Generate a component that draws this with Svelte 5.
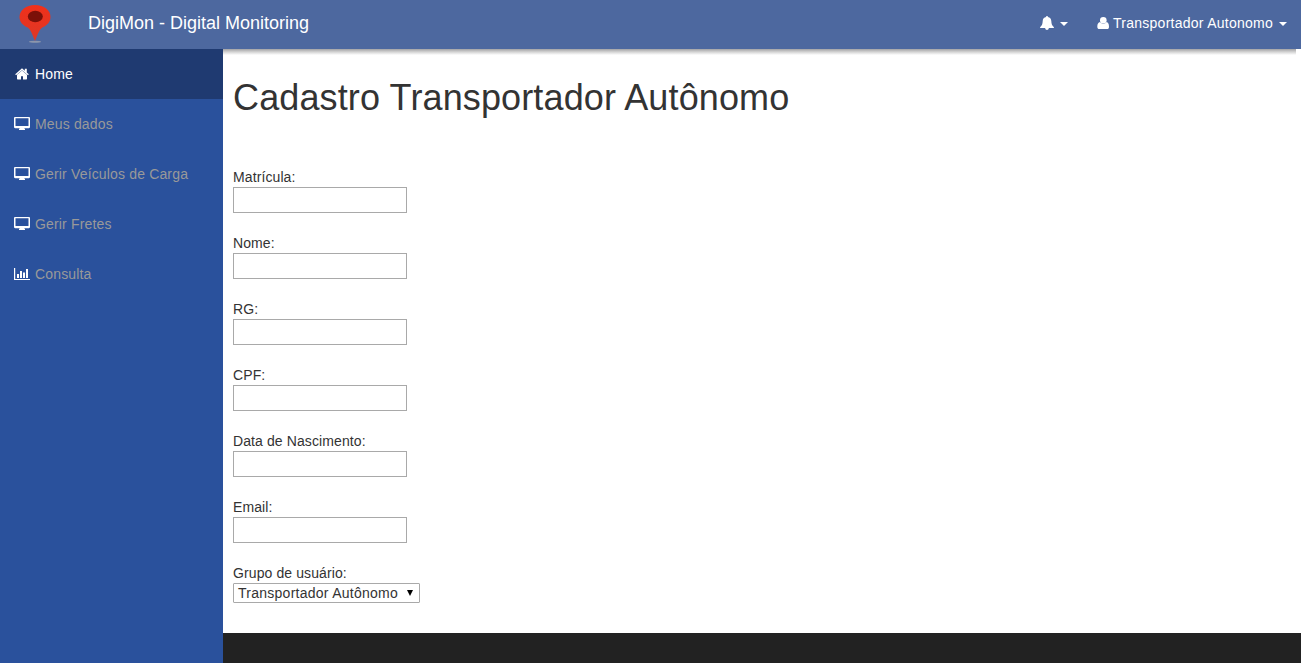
<script>
  const items = [
    { label: 'Home', icon: 'home', active: true },
    { label: 'Meus dados', icon: 'desktop' },
    { label: 'Gerir Veículos de Carga', icon: 'desktop' },
    { label: 'Gerir Fretes', icon: 'desktop' },
    { label: 'Consulta', icon: 'chart' }
  ];
  const fields = ['Matrícula', 'Nome', 'RG', 'CPF', 'Data de Nascimento', 'Email'];
</script>

<header>
  <a class="brand" href="#home">
    <svg class="logo" width="34" height="40" viewBox="0 0 34 40">
      <defs>
        <linearGradient id="pin" x1="0" y1="0" x2="0" y2="1">
          <stop offset="0" stop-color="#f0301a" />
          <stop offset="1" stop-color="#dc3827" />
        </linearGradient>
      </defs>
      <ellipse cx="17" cy="38.800" rx="6" ry="1" fill="#8b96ad" />
      <path fill="url(#pin)" d="M17 2C8 2 1.500 7 1.500 14c0 5 3.500 8.500 8.200 10.500C13 27 14.500 32 17 38c2.500-6 4-11 7.300-13.500C29 22.500 32.500 19 32.500 14 32.500 7 26 2 17 2z" />
      <ellipse cx="17.300" cy="13.500" rx="7.500" ry="5.700" fill="#7b1008" />
    </svg>
    <span>DigiMon - Digital Monitoring</span>
  </a>
  <nav class="tools">
    <a href="#alerts" aria-label="Alertas">
      <svg width="14" height="14" viewBox="0 0 14 14" fill="#fff"><path d="M7 0c.6 0 1 .4.900 1.100C10 1.500 11.200 3 11.300 5c.1 3 .8 4.800 2.700 6.200 0 .6-.4.900-1 .9H8.900C8.700 13.300 8 14 7 14s-1.700-.7-1.900-1.900H1c-.6 0-1-.3-1-.9C1.900 9.800 2.600 8 2.700 5 2.800 3 4 1.500 6.100 1.100 6 .4 6.400 0 7 0z" /></svg>
      <i class="caret bell"></i>
    </a>
    <a href="#user" class="user">
      <svg width="12" height="12" viewBox="0 0 12 12" fill="#fff"><circle cx="6.300" cy="3.300" r="3.300" /><path d="M3.100 5C1.300 5.300.3 7 .3 9.700.3 11.200 1.100 12 2.400 12h7.800c1.200 0 1.800-.8 1.800-2.300C12 7 11.200 5.300 9.500 5 8.700 6.300 7.600 6.700 6.300 6.700S3.900 6.300 3.100 5z" /></svg>
      <span>Transportador Autonomo</span>
      <i class="caret"></i>
    </a>
  </nav>
</header>

<div class="body">
  <aside>
    {#each items as item}
      <a href="#menu" class:active={item.active}>
        {#if item.icon === 'home'}
          <svg width="16" height="12" viewBox="0 0 16 12" fill="#fff"><path d="M8 2.600 3 6.700v4.100c0 .4.300.7.700.7H7V8.200h2v3.300h3.300c.4 0 .7-.3.700-.7V6.700z" /><path d="m1.200 6.200.8 1 6-5 6 5 .8-1-2-1.700V.8h-2v2L8.800.900c-.5-.4-1.100-.4-1.600 0z" /></svg>
        {:else if item.icon === 'desktop'}
          <svg class="desktop" width="16" height="13" viewBox="0 0 16 13" fill="#fff"><path fill-rule="evenodd" d="M1.200 0h13.600C15.500 0 16 .5 16 1.200v8.900c0 .7-.5 1.200-1.200 1.200H10.500v.7H11v1H5v-1h.5v-.7H1.200C.5 11.300 0 10.800 0 10.100V1.200C0 .5.500 0 1.200 0zM1.500 1.200V9h13V1.200z" /></svg>
        {:else}
          <svg width="16" height="12" viewBox="0 0 16 12" fill="#fff"><path d="M0 0h1.200v11H16v1H0zM3 6h2v4H3zM6 3h2v7H6zM9 4.500h2V10H9zM12 1h2v9h-2z" /></svg>
        {/if}
        <span>{item.label}</span>
      </a>
    {/each}
  </aside>
  <main>
    <div class="shade"></div>
    <h1>Cadastro Transportador Autônomo</h1>
    <form>
      {#each fields as field}
        <label><span>{field}:</span><input type="text" /></label>
      {/each}
      <label>
        <span>Grupo de usuário:</span>
        <button type="button" class="select"><span>Transportador Autônomo</span>
          <svg width="6" height="6" viewBox="0 0 6 6"><path d="M0 0h6L3 6z" /></svg>
        </button>
      </label>
    </form>
    <footer></footer>
  </main>
</div>

<style>
  :global(body) { margin: 0; overflow: hidden; }
  :global(#app) {
    height: 663px;
    display: flex;
    flex-direction: column;
    font: 14px/20px "Liberation Sans", Arial, sans-serif;
    color: #333;
  }
  header, header *, .body, .body * { box-sizing: border-box; }
  header {
    height: 49px;
    flex: none;
    display: flex;
    justify-content: space-between;
    background: #4d689f;
    color: #fff;
  }
  a { color: inherit; text-decoration: none; }
  svg { display: block; flex: none; }
  .brand { display: flex; padding: 3px 0 0 18px; font-size: 18px; }
  .brand span { margin: 10px 0 0 36px; white-space: nowrap; }
  .tools { display: flex; align-items: center; height: 46px; padding-right: 14px; }
  .tools a { display: flex; align-items: center; }
  .user { margin-left: 29px; }
  .user span { width: 161px; margin-left: 4px; white-space: nowrap; letter-spacing: 0.26px; }
  .caret {
    border: 4px solid transparent;
    border-top-color: #fff;
    border-bottom: 0;
    margin: 2px 0 0 5px;
  }
  .caret.bell { margin-left: 6px; }
  .body { flex: 1; display: flex; min-height: 0; }
  aside { width: 223px; flex: none; background: #2a519c; color: #999; }
  aside a { display: flex; align-items: center; height: 50px; padding-left: 14px; }
  aside a span { margin-left: 5px; letter-spacing: 0.16px; }
  aside .desktop { margin-bottom: 1px; }
  aside .active { background: #1f3a71; color: #fff; }
  main { flex: 1; min-width: 0; display: flex; flex-direction: column; background: #fff; }
  .shade { height: 6px; flex: none; margin-right: 5px; background: linear-gradient(#a2a2a5, #d4d4d4 50%, #fff); }
  h1 { margin: 23px 10px 49px; font-size: 36px; line-height: 40px; font-weight: 400; letter-spacing: 0.13px; }
  form { flex: 1; padding-left: 10px; }
  label { display: block; width: 190px; height: 66px; }
  label > span { display: block; letter-spacing: 0.1px; }
  input {
    display: block;
    width: 174px;
    height: 26px;
    border: 1px solid #a9a9a9;
    background: #fff;
    padding: 2px;
  }
  .select {
    display: flex;
    align-items: center;
    justify-content: space-between;
    width: 187px;
    height: 20px;
    padding: 0 6px 0 4px;
    border: 1px solid #a9a9a9;
    border-radius: 1px;
    background: #fff;
    color: #333;
    font: inherit;
  }
  .select span { white-space: nowrap; letter-spacing: 0.26px; }
  footer { height: 30px; flex: none; background: #222; }
</style>
